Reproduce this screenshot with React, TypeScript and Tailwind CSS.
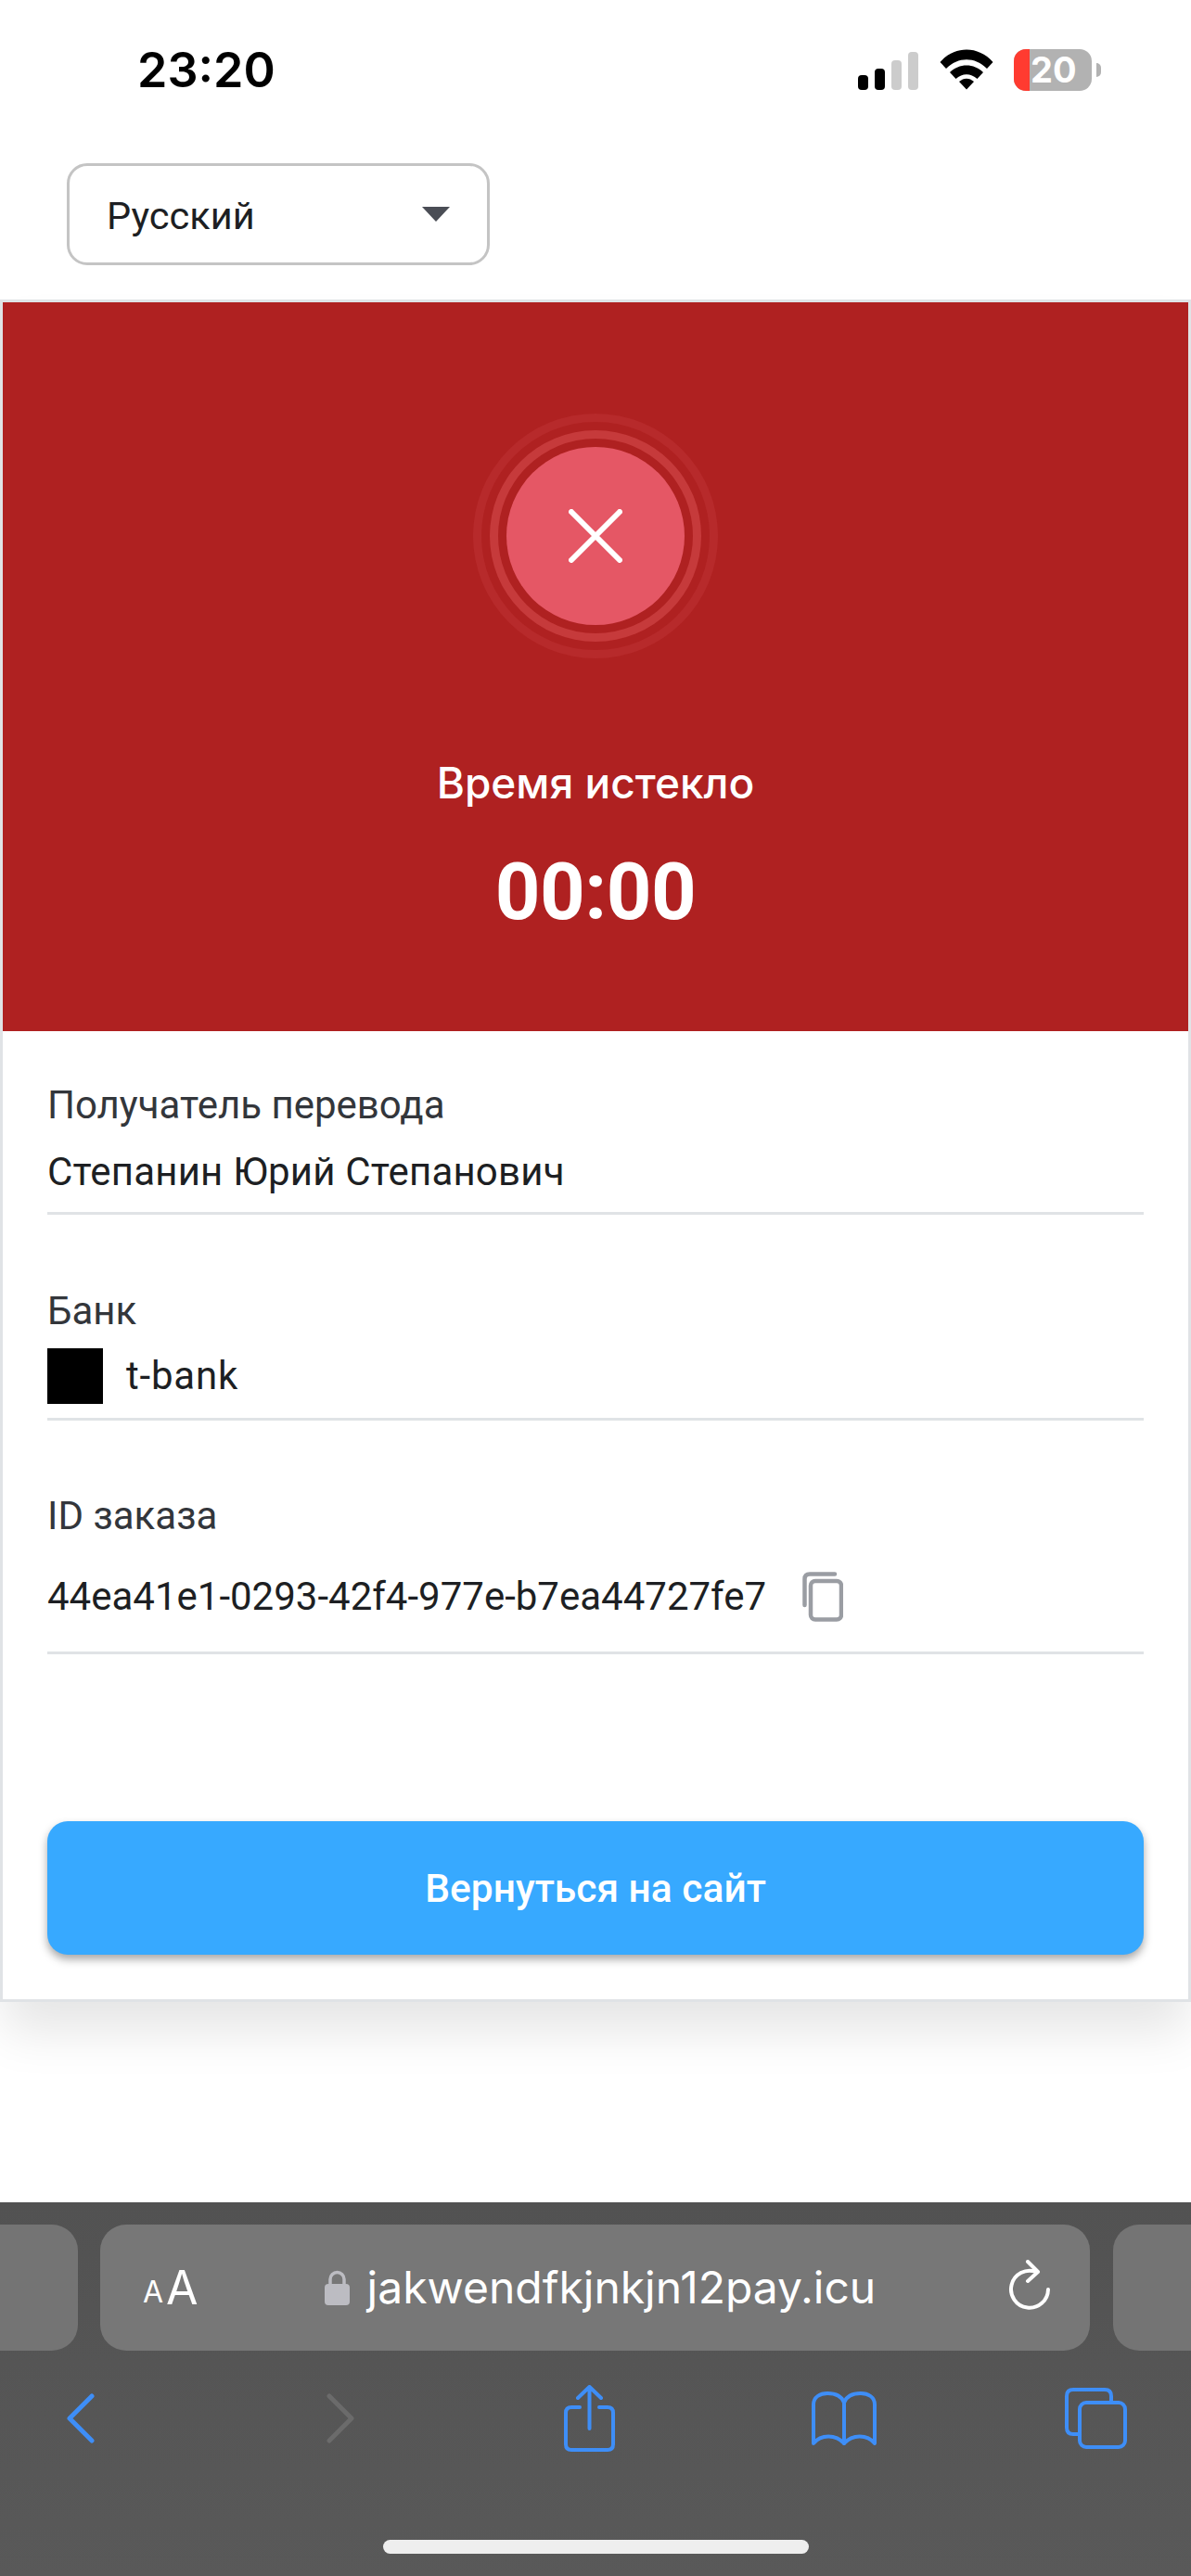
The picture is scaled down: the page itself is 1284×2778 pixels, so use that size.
import React from "react";

const Field = ({ label, children, className }: { label: string; children: React.ReactNode; className: string }) => (
  <div className={className}>
    <div className="h-12 text-[42px] leading-[48px] text-[#33363b]">{label}</div>
    {children}
  </div>
);

export default function App() {
  return (
    <div className="flex h-[2778px] w-[1284px] flex-col overflow-hidden bg-white font-['Roboto',sans-serif]">
      {/* status bar */}
      <div className="relative flex h-[176px] shrink-0 items-start pt-[45px] pl-[148px]">
        <span className="font-['Inter',sans-serif] text-[52px] font-semibold leading-[62px] text-black">23:20</span>
        <div className="absolute left-[925px] top-[53px] flex items-start">
          <svg width="66" height="44" viewBox="0 0 66 44" className="mr-[22px] mt-[1px]">
            <rect x="0" y="27" width="11" height="16" rx="4" fill="#000" />
            <rect x="18" y="20" width="11" height="23" rx="4" fill="#000" />
            <rect x="36" y="11" width="11" height="32" rx="4" fill="#ccc" />
            <rect x="54" y="2" width="11" height="41" rx="4" fill="#ccc" />
          </svg>
          <svg width="58" height="44" viewBox="0 0 58 44" className="mr-[22px]">
            <path d="M0.5 14 C16 -4 42 -4 57.5 14 L51 21 C38 8 20 8 7 21 Z" fill="#000" />
            <path d="M11 25 C21 15 37 15 47 25 L40.5 32 C33.5 25.5 24.5 25.5 17.5 32 Z" fill="#000" />
            <path d="M21 35 C26 30.5 32 30.5 37 35 L29 43.5 Z" fill="#000" />
          </svg>
          <div className="flex h-[45px] w-[84px] items-center overflow-hidden rounded-[13px] bg-[#b2b2b2]">
            <div className="h-full w-[17px] bg-[#ff3b30]" />
            <span className="ml-[1px] font-['Inter',sans-serif] text-[38px] font-bold leading-[45px] text-white">20</span>
          </div>
          <div className="ml-[5px] mt-[15px] h-[15px] w-[5px] rounded-r-full bg-[#b2b2b2]" />
        </div>
      </div>

      {/* language select */}
      <div className="ml-[72px] flex h-[110px] w-[456px] shrink-0 items-center justify-between rounded-[22px] border-[3px] border-[#c4c4c4] pl-[40px] pr-[40px]">
        <span className="mt-[4px] text-[41.5px] leading-[48px] text-[#1d1f23]">Русский</span>
        <svg width="30" height="16" viewBox="0 0 30 16"><path d="M0 0 H30 L15 16 Z" fill="#4a4d55" /></svg>
      </div>

      {/* card */}
      <div className="mt-[37px] shrink-0 border-[3px] border-[#e0e3e6] shadow-[0_36px_50px_-4px_rgba(0,0,0,0.1)]">
        <div className="flex h-[786px] flex-col items-center bg-[#af2121]">
          <div className="mt-[120px] flex h-[264px] w-[264px] items-center justify-center rounded-full bg-[#b72a2b]">
            <div className="flex h-[246px] w-[246px] items-center justify-center rounded-full bg-[#af2121]">
              <div className="flex h-[228px] w-[228px] items-center justify-center rounded-full bg-[#c63a3b]">
                <div className="flex h-[210px] w-[210px] items-center justify-center rounded-full bg-[#af2121]">
                  <div className="flex h-[192px] w-[192px] items-center justify-center rounded-full bg-[#e55765]">
                    <svg width="58" height="58" viewBox="0 0 58 58" fill="none" stroke="#fff" strokeWidth="6" strokeLinecap="round">
                      <path d="M3 3 L55 55 M55 3 L3 55" />
                    </svg>
                  </div>
                </div>
              </div>
            </div>
          </div>
          <div className="mt-[106px] font-['Inter',sans-serif] text-[46px] font-medium leading-[56px] text-white">Время истекло</div>
          <div className="mt-[40px] font-['Roboto',sans-serif] text-[85px] font-bold leading-[100px] tracking-[-0.5px] text-white">00:00</div>
        </div>

        <div className="bg-white px-[48px] pb-[48px]">
          <Field label="Получатель перевода" className="border-b-[3px] border-[#e0e3e6] pt-[56px] pb-[19px]">
            <div className="mt-6 text-[42px] leading-[48px] tracking-[0.2px] text-[#1d1f23]">Степанин Юрий Степанович</div>
          </Field>
          <Field label="Банк" className="mt-[80px] border-b-[3px] border-[#e0e3e6] pb-[15px]">
            <div className="mt-4 flex items-center">
              <div className="h-[60px] w-[60px] bg-black" />
              <span className="ml-[25px] text-[42px] leading-[48px] tracking-[0.8px] text-[#1d1f23]">t-bank</span>
            </div>
          </Field>
          <Field label="ID заказа" className="mt-[79px] border-b-[3px] border-[#e0e3e6] pb-[35px]">
            <div className="mt-[39px] flex h-12 items-center">
              <span className="text-[42px] leading-[48px] text-[#1d1f23]">44ea41e1-0293-42f4-977e-b7ea44727fe7</span>
              <svg width="44" height="54" viewBox="0 0 44 54" fill="none" stroke="#9a9da3" strokeWidth="4.5" strokeLinecap="round" className="ml-[39px]">
                <path d="M2.5 36 V8 Q2.5 2.5 8 2.5 H35" />
                <rect x="9" y="10" width="33" height="41.5" rx="5" />
              </svg>
            </div>
          </Field>
          <div className="mt-[180px] flex h-[144px] items-center justify-center rounded-[22px] bg-[#37a9ff] pt-[2px] text-[42.5px] font-medium text-white shadow-[0_5px_10px_rgba(0,0,0,0.35)]">
            Вернуться на сайт
          </div>
        </div>
      </div>

      {/* safari toolbar */}
      <div className="mt-auto flex h-[403px] shrink-0 flex-col bg-linear-to-b from-[#525252] to-[#595959]">
        <div className="mt-6 flex h-[136px] items-stretch">
          <div className="w-[84px] shrink-0 rounded-r-[28px] bg-[#747474]" />
          <div className="relative ml-6 flex w-[1067px] shrink-0 items-center rounded-[28px] bg-[#777777] text-white">
            <span className="ml-[46px] mt-[10px] font-['Inter',sans-serif] text-[32px] leading-none">A</span>
            <span className="ml-[3px] font-['Inter',sans-serif] text-[50px] leading-none">A</span>
            <svg width="27" height="38" viewBox="0 0 27 38" className="ml-[136px]">
              <path d="M6 17 V10 a7.5 7.5 0 0 1 15 0 V17" fill="none" stroke="#bcbcc2" strokeWidth="3.5" />
              <rect x="0" y="15" width="27" height="23" rx="4" fill="#bcbcc2" />
            </svg>
            <span className="ml-[19px] font-['Inter',sans-serif] text-[48px] leading-[60px] text-white">jakwendfkjnkjn12pay.icu</span>
            <svg width="46" height="56" viewBox="0 0 46 56" fill="none" stroke="#fff" strokeWidth="4" strokeLinecap="round" strokeLinejoin="round" className="absolute left-[979px] top-[38px]">
              <path d="M30 13 A20 20 0 1 0 43 32" />
              <path d="M21 2 L32 13 L21 23" />
            </svg>
          </div>
          <div className="ml-[25px] w-[84px] shrink-0 rounded-l-[28px] bg-[#747474]" />
        </div>
        <div className="mt-[37px] flex h-[72px] items-center pl-[72px]">
          <svg width="30" height="54" viewBox="0 0 30 54" fill="none" stroke="#3e8ef7" strokeWidth="5" strokeLinecap="round" strokeLinejoin="round">
            <path d="M27 3 L3 27 L27 51" />
          </svg>
          <svg width="30" height="54" viewBox="0 0 30 54" fill="none" stroke="#6b6b6b" strokeWidth="5" strokeLinecap="round" strokeLinejoin="round" className="ml-[250px]">
            <path d="M3 3 L27 27 L3 51" />
          </svg>
          <svg width="55" height="72" viewBox="0 0 55 72" fill="none" stroke="#3e8ef7" strokeWidth="4" strokeLinecap="round" strokeLinejoin="round" className="ml-[226px]">
            <path d="M17 24 H8 Q2 24 2 30 V64 Q2 70 8 70 H47 Q53 70 53 64 V30 Q53 24 47 24 H38" />
            <path d="M27.5 47 V2 M15 14 L27.5 2 L40 14" />
          </svg>
          <svg width="70" height="58" viewBox="0 0 70 58" fill="none" stroke="#3e8ef7" strokeWidth="4" strokeLinecap="round" strokeLinejoin="round" className="ml-[212px]">
            <path d="M35 12 C32 4 24 2 17 2 C9 2 2 6 2 14 V56 C10 46 26 46 35 56 C44 46 60 46 68 56 V14 C68 6 61 2 53 2 C46 2 38 4 35 12 Z" />
            <path d="M35 12 V56" />
          </svg>
          <svg width="67" height="66" viewBox="0 0 67 66" fill="none" stroke="#3e8ef7" strokeWidth="4" strokeLinecap="round" strokeLinejoin="round" className="ml-[203px]">
            <path d="M15 50 H9 Q2 50 2 43 V9 Q2 2 9 2 H43 Q50 2 50 9 V15" />
            <rect x="16" y="16" width="49" height="48" rx="7" />
          </svg>
        </div>
        <div className="mx-auto mt-auto mb-[24px] h-[15px] w-[459px] rounded-full bg-[#eeeeee]" />
      </div>
    </div>
  );
}
